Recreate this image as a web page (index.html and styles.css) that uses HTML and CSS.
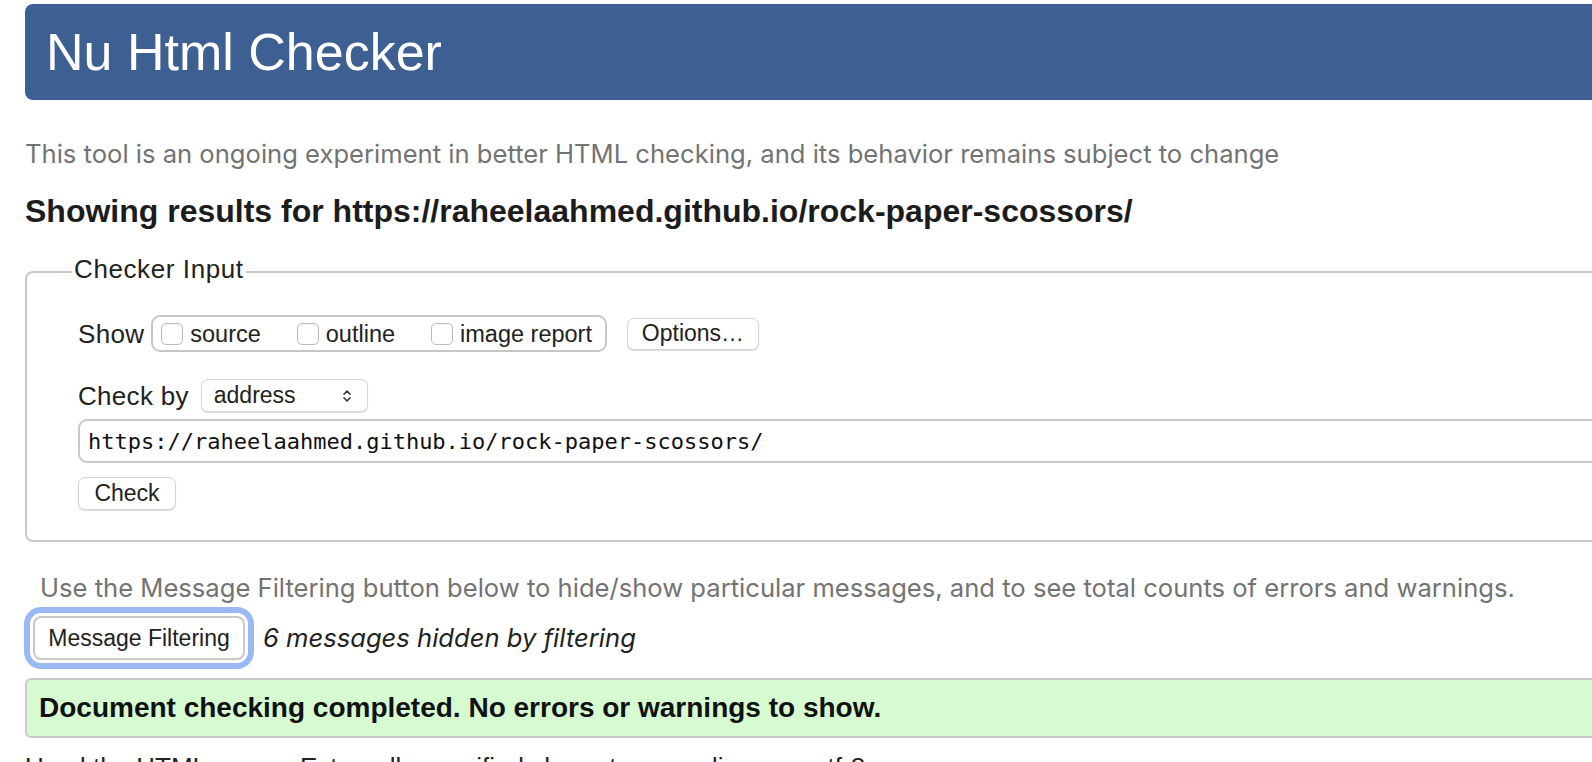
FILE: index.html
```html
<!DOCTYPE html>
<html lang="en">
<head>
<meta charset="utf-8">
<title>Nu Html Checker</title>
<link rel="stylesheet" href="styles.css">
</head>
<body>
<div class="page">
  <h1 class="masthead">Nu Html Checker</h1>
  <p class="intro">This tool is an ongoing experiment in better HTML checking, and its behavior remains subject to change</p>
  <h2 class="results-title">Showing results for https://raheelaahmed.github.io/rock-paper-scossors/</h2>
  <form class="checker-form">
    <fieldset class="checker-input">
      <legend class="legend">Checker Input</legend>
      <div class="row row-show">
        <span class="field-label">Show</span>
        <div class="show-group">
          <label class="opt"><input type="checkbox" class="box">source</label>
          <label class="opt"><input type="checkbox" class="box">outline</label>
          <label class="opt"><input type="checkbox" class="box">image report</label>
        </div>
        <button type="button" class="btn btn-options">Options…</button>
      </div>
      <div class="row row-by">
        <span class="field-label">Check by</span>
        <div class="select">
          <span>address</span>
          <svg class="chev" width="10" height="16" viewBox="0 0 10 16"><path d="M2 6.2 L5 3 L8 6.2 M2 9.8 L5 13 L8 9.8" fill="none" stroke="#333" stroke-width="1.6" stroke-linecap="round" stroke-linejoin="round"/></svg>
        </div>
      </div>
      <input class="url-field" type="text" value="https://raheelaahmed.github.io/rock-paper-scossors/">
      <div class="row row-submit"><button type="button" class="btn btn-check">Check</button></div>
    </fieldset>
  </form>
  <p class="filter-hint">Use the Message Filtering button below to hide/show particular messages, and to see total counts of errors and warnings.</p>
  <div class="filter-row">
    <button type="button" class="btn btn-filter">Message Filtering</button>
    <em class="hidden-count">6 messages hidden by filtering</em>
  </div>
  <p class="success">Document checking completed. No errors or warnings to show.</p>
  <p class="details">Used the HTML parser. Externally specified character encoding was utf-8.</p>
</div>
</body>
</html>
```
FILE: styles.css
```css
html {
  overflow: hidden;
}

body {
  margin: 0;
  padding: 4px 0 0 25px;
  background: #ffffff;
  color: #222222;
  font-family: "Liberation Sans", Arial, Helvetica, sans-serif;
}

.page {
  width: 1700px;
}

.masthead {
  margin: 0;
  height: 96px;
  line-height: 96px;
  padding-left: 21px;
  background: #3e5f92;
  color: #ffffff;
  font-size: 52px;
  font-weight: normal;
  border-radius: 8px;
}

.intro {
  margin: 38px 0 0;
  font-family: Inter, "Noto Sans", sans-serif;
  font-size: 25.6px;
  line-height: 32px;
  color: #737373;
}

.results-title {
  margin: 23px 0 0;
  font-size: 32px;
  line-height: 36px;
  font-weight: bold;
  color: #1c1c1c;
}

.checker-form {
  margin: 25px 0 0;
}

.checker-input {
  margin: 0;
  padding: 25px 0 30px 51px;
  border: 2px solid #c8c8c8;
  border-radius: 8px;
  min-width: 0;
}

.legend {
  margin-left: -6px;
  padding: 0 2px 6px;
  font-size: 26px;
  line-height: 30px;
  letter-spacing: 0.6px;
  color: #222222;
}

.row {
  display: flex;
  align-items: center;
}

.field-label {
  font-size: 26px;
  line-height: 30px;
  letter-spacing: 0.3px;
  color: #222222;
}

.row-show {
  height: 37px;
}

.show-group {
  box-sizing: border-box;
  display: flex;
  align-items: center;
  height: 37px;
  margin-left: 7px;
  padding: 0 13px 0 8px;
  border: 2px solid #c6c6c6;
  border-radius: 9px;
}

.opt {
  display: flex;
  align-items: center;
  gap: 7px;
  margin-right: 36px;
  font-size: 23.5px;
  line-height: 28px;
  color: #222222;
}

.opt:last-child {
  margin-right: 0;
}

.box {
  appearance: none;
  -webkit-appearance: none;
  box-sizing: border-box;
  width: 22px;
  height: 22px;
  margin: 0;
  background: #ffffff;
  border: 1px solid #bdbdbd;
  border-radius: 5px;
  box-shadow: inset 0 1px 1px rgba(0, 0, 0, 0.06);
}

.btn {
  box-sizing: border-box;
  margin: 0;
  padding: 0;
  background: #ffffff;
  border: 1px solid #d3d3d3;
  border-radius: 7px;
  box-shadow: 0 1px 1px rgba(0, 0, 0, 0.14);
  font-family: "Liberation Sans", Arial, Helvetica, sans-serif;
  font-size: 23px;
  color: #222222;
}

.btn-options {
  margin-left: 20px;
  width: 132px;
  height: 32px;
}

.row-by {
  margin-top: 27px;
  height: 33px;
}

.select {
  box-sizing: border-box;
  display: flex;
  align-items: center;
  justify-content: space-between;
  width: 167px;
  height: 33px;
  margin-left: 12px;
  padding: 0 15px 0 12px;
  background: #ffffff;
  border: 1px solid #d6d6d6;
  border-radius: 7px;
  box-shadow: 0 1px 1px rgba(0, 0, 0, 0.14);
  font-size: 23px;
  color: #222222;
}

.chev {
  display: block;
}

.url-field {
  box-sizing: border-box;
  display: block;
  width: 1640px;
  height: 44px;
  margin: 7px 0 0;
  padding: 0 0 0 8px;
  border: 2px solid #c9c9c9;
  border-radius: 9px;
  background: #ffffff;
  font-family: "DejaVu Sans Mono", "Liberation Mono", monospace;
  font-size: 22px;
  color: #111111;
  outline: none;
}

.row-submit {
  margin-top: 14px;
}

.btn-check {
  width: 98px;
  height: 33px;
}

.filter-hint {
  margin: 30px 0 0 15px;
  font-family: Inter, "Noto Sans", sans-serif;
  font-size: 25.6px;
  line-height: 32px;
  color: #737373;
}

.filter-row {
  display: flex;
  align-items: center;
  margin-top: 12px;
  padding-left: 8px;
  height: 44px;
}

.btn-filter {
  width: 212px;
  height: 44px;
  border: 2px solid #c8c8c8;
  border-radius: 8px;
  box-shadow: 0 0 0 3px #ffffff, 0 0 0 9px #9ab8f3;
}

.hidden-count {
  margin-left: 18px;
  font-family: Inter, "Noto Sans", sans-serif;
  font-style: italic;
  font-size: 25.6px;
  line-height: 32px;
  color: #222222;
}

.success {
  box-sizing: border-box;
  display: flex;
  align-items: center;
  height: 60px;
  margin: 18px 0 0;
  padding-left: 12px;
  background: #d6fbd1;
  border: 2px solid #c8c8c8;
  border-radius: 6px;
  font-size: 28px;
  font-weight: bold;
  color: #111111;
}

.details {
  margin: 14px 0 0;
  font-size: 26px;
  line-height: 30px;
  color: #222222;
}
```
